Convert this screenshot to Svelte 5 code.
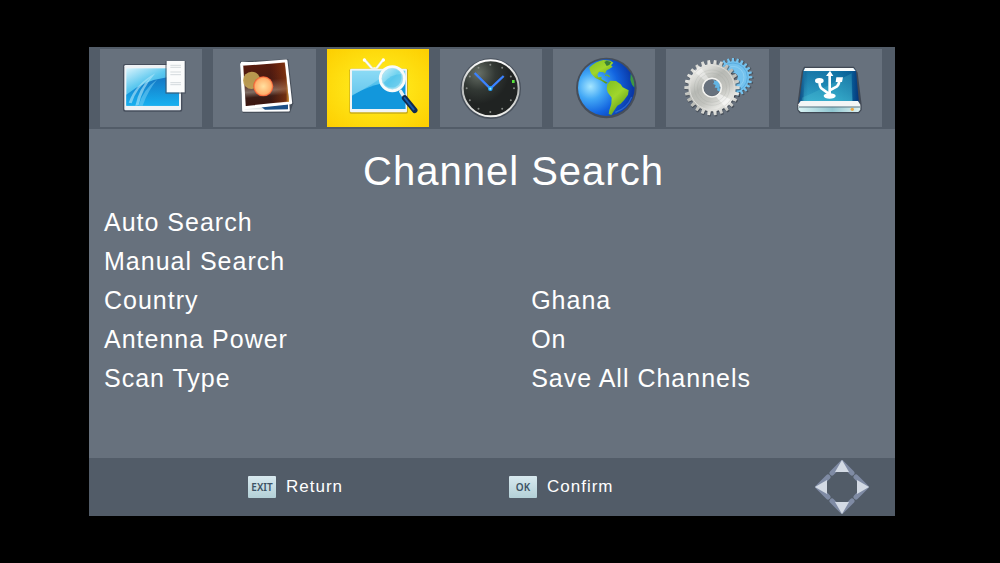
<script lang="ts">
  interface Tab {
    id: string;
    label: string;
    viewBox: string;
  }

  interface Row {
    label: string;
    value: string;
  }

  const tabs: Tab[] = [
    { id: 'program', label: 'Program', viewBox: '60 27 306 234' },
    { id: 'picture', label: 'Picture', viewBox: '24 27 306 234' },
    { id: 'search', label: 'Channel Search', viewBox: '18 27 306 234' },
    { id: 'time', label: 'Time', viewBox: '15 27 306 234' },
    { id: 'option', label: 'Option', viewBox: '15 27 306 234' },
    { id: 'system', label: 'System', viewBox: '18 27 306 234' },
    { id: 'usb', label: 'USB', viewBox: '30 27 306 234' }
  ];

  const rows: Row[] = [
    { label: 'Auto Search', value: '' },
    { label: 'Manual Search', value: '' },
    { label: 'Country', value: 'Ghana' },
    { label: 'Antenna Power', value: 'On' },
    { label: 'Scan Type', value: 'Save All Channels' }
  ];

  let activeTab = $state('search');

  const hours = [...Array(12).keys()].map((h) => {
    const a = (h * Math.PI) / 6;
    return { x: 166 + 71 * Math.sin(a), y: 145 - 71 * Math.cos(a) };
  });

  function gear(cx: number, cy: number, outer: number, inner: number, teeth: number) {
    const step = (Math.PI * 2) / teeth;
    const at = (r: number, a: number) => `${(cx + r * Math.cos(a)).toFixed(1)} ${(cy + r * Math.sin(a)).toFixed(1)}`;
    let d = '';
    for (let i = 0; i < teeth; i++) {
      const a = i * step;
      d += `${i ? 'L' : 'M'}${at(inner, a - step * 0.3)}L${at(outer, a - step * 0.2)}`;
      d += `L${at(outer, a + step * 0.2)}L${at(inner, a + step * 0.3)}`;
    }
    return d + 'Z';
  }

  function ring(cx: number, cy: number, r: number) {
    return `M${cx - r} ${cy}a${r} ${r} 0 1 0 ${r * 2} 0a${r} ${r} 0 1 0 ${-r * 2} 0Z`;
  }
</script>

<div class="screen">
  <main class="panel">
    <nav class="tabs">
      {#each tabs as tab}
        <button
          class="tab"
          class:active={activeTab === tab.id}
          aria-label={tab.label}
          onclick={() => (activeTab = tab.id)}
        >
          <svg class="icon" viewBox={tab.viewBox} aria-hidden="true">
            {#if tab.id === 'program'}
              <defs>
                <linearGradient id="programSky" x1="0" y1="0" x2="0.7" y2="1">
                  <stop offset="0" stop-color="#d8f3fc" />
                  <stop offset="0.4" stop-color="#5cc8ef" />
                  <stop offset="1" stop-color="#0c8fd8" />
                </linearGradient>
                <linearGradient id="programSea" x1="0" y1="0" x2="0" y2="1">
                  <stop offset="0" stop-color="#1577c4" />
                  <stop offset="1" stop-color="#16b0f0" />
                </linearGradient>
              </defs>
              <rect x="129" y="72" width="178" height="143" rx="6" fill="#3f4654" opacity="0.8" />
              <rect x="133" y="75" width="170" height="136" rx="4" fill="#eef2f5" />
              <rect x="139" y="85" width="158" height="112" fill="url(#programSky)" />
              <path d="M139 164Q190 122 262 112L297 118V197H139Z" fill="url(#programSea)" />
              <path d="M146 188Q166 132 226 100Q186 145 176 196L166 197Q178 142 210 114Q170 142 155 190Z" fill="#b4e6f9" opacity="0.6" />
              <path d="M176 197Q188 150 232 118Q204 152 188 197Z" fill="#7bd2f6" opacity="0.5" />
              <rect x="256" y="63" width="62" height="98" rx="2" fill="#414957" opacity="0.6" />
              <rect x="260" y="63" width="54" height="94" fill="#fbfcfc" />
              <g stroke="#d4dadd" stroke-width="3">
                <path d="M271 76h32M271 82h32M271 96h32M271 104h32M271 128h32M271 134h32" />
              </g>
            {:else if tab.id === 'picture'}
              <defs>
                <linearGradient id="photo" x1="0" y1="0" x2="0.1" y2="1">
                  <stop offset="0" stop-color="#5d1c0c" />
                  <stop offset="0.45" stop-color="#481a12" />
                  <stop offset="0.68" stop-color="#806d64" />
                  <stop offset="0.8" stop-color="#3a1c16" />
                  <stop offset="1" stop-color="#3b130d" />
                </linearGradient>
                <linearGradient id="photoGlow" x1="0" y1="0" x2="1" y2="0">
                  <stop offset="0.6" stop-color="#a8380d" stop-opacity="0" />
                  <stop offset="0.93" stop-color="#a8480f" stop-opacity="0.5" />
                  <stop offset="1" stop-color="#e8b040" />
                </linearGradient>
                <radialGradient id="photoLight">
                  <stop offset="0" stop-color="#ffe0a0" />
                  <stop offset="0.8" stop-color="#ffb06c" />
                  <stop offset="1" stop-color="#f2502b" />
                </radialGradient>
              </defs>
              <path d="M106 64L250 58L265 190L255 218L113 219Z" fill="#272d38" opacity="0.5" />
              <path d="M111 69L240 72L251 211L115 212Z" fill="#dfe5e9" stroke="#fff" stroke-width="7" stroke-linejoin="round" />
              <path d="M168 200L249 192V208L180 209Z" fill="#1b4f87" />
              <path d="M110 73L243 63L257 188L118 203Z" fill="url(#photo)" stroke="#fff" stroke-width="9" stroke-linejoin="round" />
              <path d="M114 77L240 67L252 185L122 198Z" fill="url(#photoGlow)" />
              <circle cx="140" cy="121" r="26" fill="#c4a557" opacity="0.9" />
              <circle cx="175" cy="139" r="30" fill="url(#photoLight)" />
            {:else if tab.id === 'search'}
              <defs>
                <linearGradient id="tvScreen" x1="0" y1="0" x2="0" y2="1">
                  <stop offset="0" stop-color="#77d4f4" />
                  <stop offset="1" stop-color="#149ee0" />
                </linearGradient>
                <linearGradient id="lens" x1="0" y1="0" x2="1" y2="1">
                  <stop offset="0" stop-color="#d9f4fb" />
                  <stop offset="0.5" stop-color="#6fd2ef" />
                  <stop offset="1" stop-color="#c4edf9" />
                </linearGradient>
              </defs>
              <path d="M131 60L154 86M186 60L165 87" stroke="#e6e7c8" stroke-width="8" stroke-linecap="round" />
              <path d="M131 60L153 85M186 60L166 85" stroke="#fff" stroke-width="4" />
              <circle cx="130" cy="60" r="5" fill="#fff" />
              <circle cx="187" cy="60" r="5" fill="#fff" />
              <path d="M150 88Q160 76 171 88Z" fill="#fff" />
              <rect x="85" y="86" width="176" height="135" rx="5" fill="#a88d1d" opacity="0.6" />
              <rect x="87" y="86" width="171" height="131" rx="4" fill="#f1f4f5" />
              <rect x="93" y="92" width="160" height="115" fill="url(#tvScreen)" />
              <path d="M93 168Q150 128 253 120V207H93Z" fill="#1297dc" />
              <path d="M93 93H200Q176 124 93 166Z" fill="#a3e3f7" opacity="0.45" />
              <path d="M239 154L252 176" stroke="#e9eef0" stroke-width="10" stroke-linecap="round" />
              <path d="M251 174L281 211" stroke="#102a50" stroke-width="17" stroke-linecap="round" />
              <path d="M251 174L278 208" stroke="#155aab" stroke-width="6" stroke-linecap="round" />
              <circle cx="214" cy="116" r="36" fill="url(#lens)" stroke="#f8fbfb" stroke-width="9" />
              <path d="M188 128Q210 103 240 102Q246 130 222 142Q200 146 188 128Z" fill="#41bce8" opacity="0.5" />
              <circle cx="214" cy="116" r="31" fill="none" stroke="#a9dcec" stroke-width="2" />
            {:else if tab.id === 'time'}
              <defs>
                <radialGradient id="dial" cx="0.28" cy="0.23" r="0.55">
                  <stop offset="0" stop-color="#687067" />
                  <stop offset="0.55" stop-color="#323834" />
                  <stop offset="1" stop-color="#202322" />
                </radialGradient>
                <linearGradient id="rim" x1="0" y1="0" x2="0" y2="1">
                  <stop offset="0" stop-color="#fff" />
                  <stop offset="0.5" stop-color="#b5b8b7" />
                  <stop offset="1" stop-color="#f1f1ee" />
                </linearGradient>
              </defs>
              <circle cx="167" cy="146" r="91" fill="#303642" opacity="0.55" />
              <circle cx="167" cy="145" r="84" fill="url(#dial)" stroke="url(#rim)" stroke-width="6" />
              {#each hours as dot}
                <circle cx={dot.x} cy={dot.y} r="3" fill="#858985" />
              {/each}
              <rect x="231" y="120" width="8" height="9" fill="#58e33c" />
              <path d="M119 99L166 146L206 108" fill="none" stroke="#3b82ff" stroke-width="7" />
              <circle cx="166" cy="146" r="7" fill="#25a7ff" />
              <circle cx="166" cy="146" r="3" fill="#9ce8ff" />
            {:else if tab.id === 'option'}
              <defs>
                <radialGradient id="ocean" cx="0.22" cy="0.48" r="0.75">
                  <stop offset="0" stop-color="#a5e6ff" />
                  <stop offset="0.3" stop-color="#42a8f6" />
                  <stop offset="0.65" stop-color="#1263df" />
                  <stop offset="1" stop-color="#0a38a6" />
                </radialGradient>
                <linearGradient id="land" x1="0" y1="0" x2="0.6" y2="1">
                  <stop offset="0" stop-color="#7fbf22" />
                  <stop offset="0.5" stop-color="#a0d62c" />
                  <stop offset="1" stop-color="#5b9a17" />
                </linearGradient>
              </defs>
              <circle cx="175" cy="144" r="91" fill="#303743" opacity="0.6" />
              <circle cx="175" cy="143" r="85" fill="url(#ocean)" />
              <path d="M124 83Q143 64 166 60L187 62L196 68L189 76L194 80L184 87L176 91L171 101L166 97L153 95L148 104L151 112L161 110L160 117L170 123L179 128L174 131L160 122L142 114L130 101L126 92Z" fill="url(#land)" />
              <path d="M169 66L176 62L190 66L184 75L176 78Z" fill="#397f36" />
              <path d="M178 133L187 122L204 123L218 133L224 142L242 151L240 164L228 181L218 191L208 197L199 211L190 225L182 222L184 211L190 192L191 173L179 157L176 146Z" fill="url(#land)" />
              <path d="M171 106Q180 103 185 111" fill="none" stroke="#69ae3c" stroke-width="4" />
              <path d="M248 101Q261 119 259 143L252 134L247 120Z" fill="#3f9641" />
              <path d="M202 217Q238 205 251 171" fill="none" stroke="#6aaef2" stroke-width="4" opacity="0.35" />
            {:else if tab.id === 'system'}
              <defs>
                <linearGradient id="steel" x1="0.1" y1="0" x2="0.85" y2="1">
                  <stop offset="0" stop-color="#bfc1bb" />
                  <stop offset="0.2" stop-color="#e6e6e2" />
                  <stop offset="0.42" stop-color="#b7b9b4" />
                  <stop offset="0.62" stop-color="#c2c3be" />
                  <stop offset="0.8" stop-color="#e8e8e4" />
                  <stop offset="1" stop-color="#a6a8a4" />
                </linearGradient>
              </defs>
              <path d={gear(219, 114, 59, 48, 24) + ring(219, 114, 14)} fill="#30353e" opacity="0.5" />
              <path d={gear(216, 112, 58, 48, 24) + ring(216, 112, 14)} fill="#74c2ee" fill-rule="evenodd" />
              <circle cx="216" cy="112" r="33" fill="none" stroke="#9cd7f3" stroke-width="3" opacity="0.6" />
              <circle cx="216" cy="112" r="43" fill="none" stroke="#3d98d0" stroke-width="3" opacity="0.5" />
              <path d={gear(155, 146, 84, 72, 26) + ring(153, 143, 25)} fill="#2c323b" fill-rule="evenodd" opacity="0.55" />
              <path d="M157 119L164 124L174 123L177 155L168 151L169 143L161 143L164 135L156 132L160 126Z" fill="#62b5e4" />
              <path d={gear(153, 143, 83, 71, 26) + ring(153, 143, 27)} fill="url(#steel)" fill-rule="evenodd" />
              <path d="M173 160L213 181Q205 196 195 204L164 169Z" fill="#fff" opacity="0.55" />
              <path d="M134 124L97 93L116 77L144 117Z" fill="#fff" opacity="0.4" />
              <g fill="none">
                <circle cx="153" cy="143" r="67" stroke="#dededa" stroke-width="3" />
                <circle cx="153" cy="143" r="53" stroke="#999c98" stroke-width="1" opacity="0.6" />
                <circle cx="153" cy="143" r="44" stroke="#999c98" stroke-width="1" opacity="0.6" />
                <circle cx="153" cy="143" r="28" stroke="#f2f2ef" stroke-width="5" />
              </g>
            {:else}
              <defs>
                <linearGradient id="drive" x1="0" y1="0" x2="1" y2="0">
                  <stop offset="0" stop-color="#0c477d" />
                  <stop offset="0.15" stop-color="#258ebd" />
                  <stop offset="0.6" stop-color="#1685b5" />
                  <stop offset="0.85" stop-color="#08649d" />
                  <stop offset="1" stop-color="#053478" />
                </linearGradient>
                <linearGradient id="driveShade" x1="0" y1="0" x2="0" y2="1">
                  <stop offset="0" stop-color="#07558a" stop-opacity="0.4" />
                  <stop offset="1" stop-color="#42c2d9" stop-opacity="0.5" />
                </linearGradient>
                <linearGradient id="driveFront" x1="0" y1="0" x2="1" y2="0">
                  <stop offset="0" stop-color="#d9f3f4" />
                  <stop offset="0.55" stop-color="#8fc6d1" />
                  <stop offset="1" stop-color="#dff2f0" />
                </linearGradient>
              </defs>
              <path d="M102 80H252L263 98L275 194V210L267 220H89L82 210V194L95 95Z" fill="#303743" opacity="0.7" />
              <path d="M105 84H250L258 93L267 188H87L100 92Z" fill="url(#drive)" />
              <path d="M105 94H243L247 185H100Z" fill="url(#driveShade)" />
              <path d="M96 173Q161 146 245 100L248 184H95Z" fill="#55c7d8" opacity="0.25" />
              <path d="M105 84H250L257 93H101Z" fill="#f8fbfb" />
              <path d="M92 183H264L271 194V202H85V193Z" fill="#f3f6f6" />
              <path d="M85 200H271V209L265 216H92L85 209Z" fill="url(#driveFront)" />
              <path d="M87 201H270" stroke="#5b7581" stroke-width="3" />
              <circle cx="247" cy="208" r="5" fill="#eda642" />
              <path d="M179 168V101M179 163L154 145Q148 139 149 124M179 151L201 139Q208 133 208 119" fill="none" stroke="#fff" stroke-width="8" />
              <path d="M168 108L180 92L190 108Z" fill="#fff" />
              <ellipse cx="148" cy="122" rx="13" ry="8" fill="#fff" />
              <path d="M199 112H219L216 126H197Z" fill="#fff" />
              <ellipse cx="179" cy="168" rx="18" ry="8" fill="#fff" />
            {/if}
          </svg>
        </button>
      {/each}
    </nav>

    <section class="content">
      <h1>Channel Search</h1>
      <div class="rows">
        {#each rows as row}
          <button class="row">
            <span>{row.label}</span>
            <span>{row.value}</span>
          </button>
        {/each}
      </div>
    </section>

    <footer class="footer">
      <button class="hint"><kbd>EXIT</kbd>Return</button>
      <button class="hint"><kbd>OK</kbd>Confirm</button>
      <svg class="dpad" viewBox="0 0 54 54" aria-hidden="true">
        {#each [0, 90, 180, 270] as angle}
          <g transform="rotate({angle} 27 27)">
            <path d="M17 13L27 3L37 13" fill="none" stroke="#7f8ba4" stroke-width="5" stroke-linecap="round" />
            <path d="M27 0L34 12H20Z" fill="#d3dae4" />
          </g>
        {/each}
      </svg>
    </footer>
  </main>
</div>

<style>
  :global(body) {
    background: #000;
  }

  .screen {
    display: flex;
    box-sizing: border-box;
    min-height: 100vh;
    padding: 47px 105px 47px 89px;
    font-family: 'Liberation Sans', Arial, sans-serif;
    letter-spacing: 1px;
    color: #fff;
  }

  .panel {
    flex: 1;
    display: flex;
    flex-direction: column;
    background: #67717d;
  }

  button {
    padding: 0;
    border: none;
    background: transparent;
    color: inherit;
    font: inherit;
    letter-spacing: inherit;
    cursor: pointer;
  }

  .tabs {
    display: grid;
    grid-template-columns: repeat(7, 1fr);
    gap: 11px;
    padding: 2px 13px 2px 11px;
    background: #525c68;
  }

  .tab {
    display: flex;
    justify-content: center;
    background: #67717d;
  }

  .tab.active {
    background: radial-gradient(#ffe81a 30%, #fdce00 100%);
  }

  .icon {
    width: 102px;
    height: 78px;
  }

  .content {
    flex: 1;
    padding: 19px 0 0 15px;
  }

  h1 {
    margin: 0 0 9px;
    padding-left: 28px;
    font-size: 40px;
    font-weight: 400;
    line-height: 46px;
    text-align: center;
  }

  .rows {
    display: flex;
    flex-direction: column;
  }

  .row {
    display: grid;
    grid-template-columns: 54% 1fr;
    font-size: 25px;
    line-height: 39px;
    text-align: left;
  }

  .footer {
    display: grid;
    grid-template-columns: 261fr 306fr 54px;
    align-items: center;
    padding: 2px 26px 2px 159px;
    background: #525c68;
  }

  .hint {
    display: flex;
    align-items: center;
    gap: 10px;
    font-size: 17px;
  }

  kbd {
    width: 28px;
    border-radius: 1px;
    background: linear-gradient(#d8e9ef, #b3d0d7);
    color: #3d5264;
    font-family: 'Noto Sans', sans-serif;
    font-size: 10px;
    font-weight: 600;
    letter-spacing: 0;
    line-height: 22px;
    text-align: center;
  }

  .dpad {
    width: 54px;
    height: 54px;
  }
</style>
